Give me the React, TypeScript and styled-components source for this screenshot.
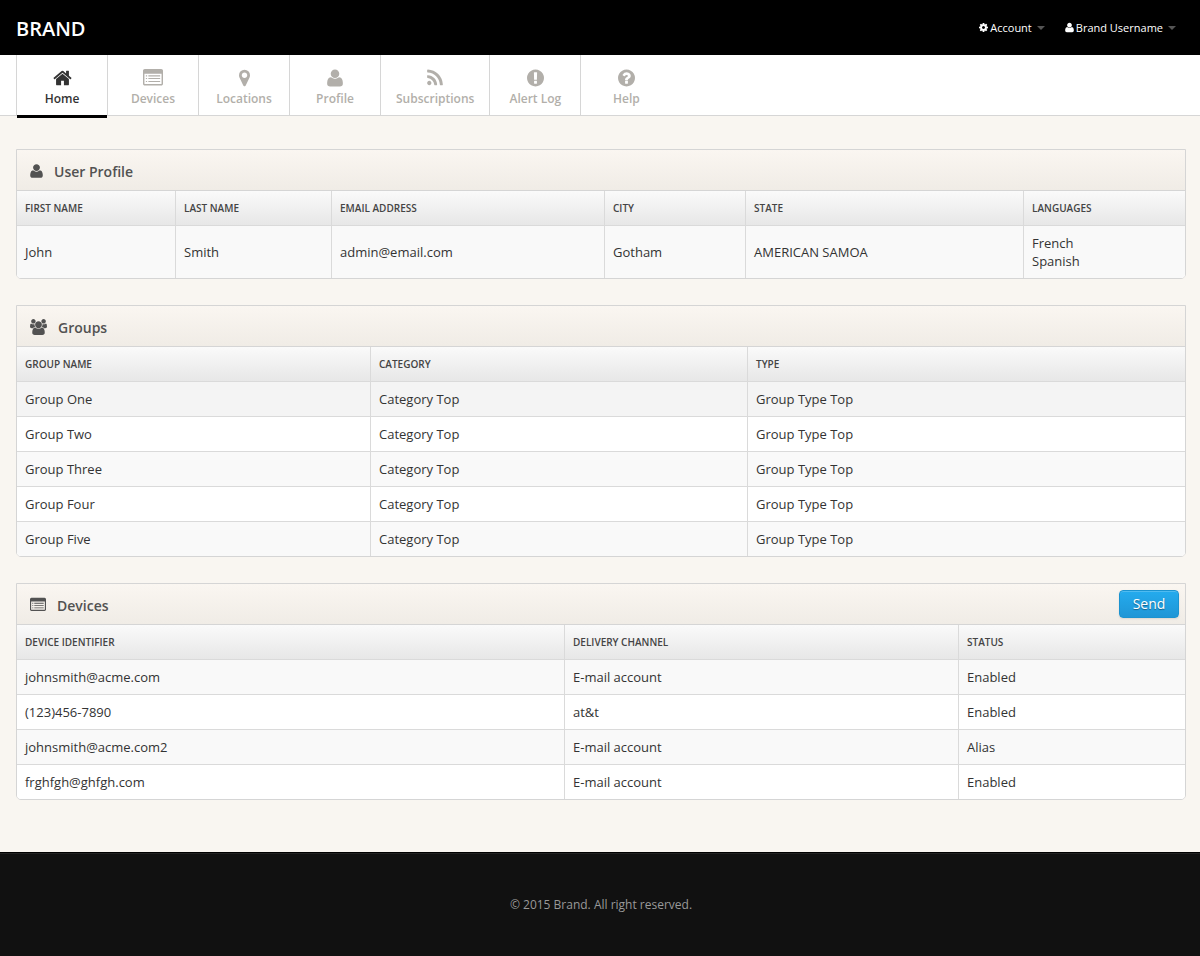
import React from "react";
import styled, { createGlobalStyle } from "styled-components";

const GlobalStyle = createGlobalStyle`
  *, *::before, *::after { box-sizing: border-box; }
  body {
    margin: 0;
    background: #f9f6f1;
    color: #333;
    font-family: "Open Sans", "Noto Sans", sans-serif;
    font-size: 13px;
    line-height: 18px;
  }
`;

type Glyph = { box: string; width: number; path: string };

const glyphs = {
  home: {
    box: "64 0 1664 1792",
    width: 1664,
    path: "M1472 992v480q0 26-19 45t-45 19h-384v-384h-256v384h-384q-26 0-45-19t-19-45v-480q0-1 .5-3t.5-3l575-474 575 474q1 2 1 6zm223-69l-62 74q-8 9-21 11h-3q-13 0-21-7l-692-577-692 577q-12 8-24 7-13-2-21-11l-62-74q-8-10-7-23.500t11-21.500l719-599q32-26 76-26t76 26l244 204v-195q0-14 9-23t23-9h192q14 0 23 9t9 23v408l219 182q10 8 11 21.500t-7 23.500z",
  },
  list: {
    box: "0 0 1792 1792",
    width: 1792,
    path: "M160 96h1472q66 0 113 47t47 113v1152q0 66-47 113t-113 47h-1472q-66 0-113-47t-47-113v-1152q0-66 47-113t113-47zm-32 416v880q0 48 48 48h1440q48 0 48-48v-880zM256 656h112v96h-112zM480 656h1056v96h-1056zM256 896h112v96h-112zM480 896h1056v96h-1056zM256 1168h112v96h-112zM480 1168h1056v96h-1056z",
  },
  marker: {
    box: "384 0 1024 1792",
    width: 1024,
    path: "M1152 640q0-106-75-181t-181-75-181 75-75 181 75 181 181 75 181-75 75-181zm256 0q0 109-33 179l-364 774q-16 33-47.500 52t-67.500 19-67.500-19-46.500-52l-365-774q-33-70-33-179 0-212 150-362t362-150 362 150 150 362z",
  },
  user: {
    box: "192 0 1408 1792",
    width: 1408,
    path: "M1600 1405q0 120-73 189.500t-194 69.500h-874q-121 0-194-69.500t-73-189.500q0-53 3.500-103.500t14-109 26.500-108.500 43-97.500 62-81 85.500-53.500 111.500-20q9 0 42 21.500t74.500 48 108 48 133.500 21.500 133.500-21.500 108-48 74.500-48 42-21.500q61 0 111.500 20t85.500 53.500 62 81 43 97.500 26.500 108.500 14 109 3.500 103.500zm-320-893q0 159-112.500 271.500t-271.500 112.500-271.500-112.500-112.500-271.500 112.500-271.500 271.500-112.500 271.500 112.500 112.500 271.500z",
  },
  rss: {
    box: "192 0 1408 1792",
    width: 1408,
    path: "M576 1344q0 80-56 136t-136 56-136-56-56-136 56-136 136-56 136 56 56 136zm512 123q2 28-17 48-18 21-47 21h-135q-25 0-43-16.500t-20-41.500q-22-229-184.500-391.500t-391.500-184.500q-25-2-41.500-20t-16.500-43v-135q0-29 21-47 17-17 43-17h5q160 13 306 80.500t259 181.500q114 113 181.500 259t80.500 306zm512 2q2 27-18 47-18 20-46 20h-143q-26 0-44.500-17.500t-19.500-42.500q-12-215-101-408.500t-231.500-336-336-231.500-408.500-102q-25-1-42.500-19.500t-17.500-43.500v-143q0-28 20-46 18-18 44-18h3q262 13 501.500 120t425.500 294q187 186 294 425.500t120 501.500z",
  },
  alert: {
    box: "128 0 1536 1792",
    width: 1536,
    path: "M896 128q209 0 385.500 103t279.500 279.500 103 385.500-103 385.500-279.500 279.500-385.500 103-385.500-103-279.500-279.500-103-385.500 103-385.500 279.500-279.500 385.500-103zm128 1247v-190q0-14-9-23.500t-22-9.500h-192q-13 0-23 10t-10 23v190q0 13 10 23t23 10h192q13 0 22-9.500t9-23.500zm-2-344l18-621q0-12-10-18-10-8-24-8h-220q-14 0-24 8-10 6-10 18l17 621q0 10 10 17.500t24 7.500h185q14 0 23.500-7.500t10.500-17.500z",
  },
  help: {
    box: "128 0 1536 1792",
    width: 1536,
    path: "M1024 1376v-192q0-14-9-23t-23-9h-192q-14 0-23 9t-9 23v192q0 14 9 23t23 9h192q14 0 23-9t9-23zm256-672q0-88-55.500-163t-138.500-116-170-41q-243 0-371 213-15 24 8 42l132 100q7 6 19 6 16 0 25-12 53-68 86-92 34-24 86-24 48 0 85.500 26t37.500 59q0 38-20 61t-68 45q-63 28-115.500 86.500t-52.500 125.500v36q0 14 9 23t23 9h192q14 0 23-9t9-23q0-19 21.500-49.500t54.500-49.500q32-18 49-28.500t46-35 44.500-48 28-60.500 12.500-81zm384 192q0 209-103 385.500t-279.500 279.500-385.500 103-385.500-103-279.500-279.500-103-385.500 103-385.500 279.500-279.500 385.500-103 385.500 103 279.500 279.500 103 385.500z",
  },
  cog: {
    box: "128 0 1536 1792",
    width: 1536,
    path: "M1152 896q0-106-75-181t-181-75-181 75-75 181 75 181 181 75 181-75 75-181zm512-109v222q0 12-8 23t-20 13l-185 28q-19 54-39 91 35 50 107 138 10 12 10 25t-9 23q-27 37-99 108t-94 71q-12 0-26-9l-138-108q-44 23-91 38-16 136-29 186-7 28-36 28h-222q-14 0-24.500-8.500t-11.500-21.500l-28-184q-49-16-90-37l-141 107q-10 9-25 9-14 0-25-11-126-114-165-168-7-10-7-23 0-12 8-23 15-21 51-66.500t54-70.500q-27-50-41-99l-183-27q-13-2-21-12.500t-8-23.500v-222q0-12 8-23t19-13l186-28q14-46 39-92-40-57-107-138-10-12-10-24 0-10 9-23 26-36 98.500-107.500t94.500-71.500q13 0 26 10l138 107q44-23 91-38 16-136 29-186 7-28 36-28h222q14 0 24.500 8.500t11.500 21.500l28 184q49 16 90 37l142-107q9-9 24-9 13 0 25 10 129 119 165 170 7 8 7 22 0 12-8 23-15 21-51 66.500t-54 70.500q26 50 41 98l183 28q13 2 21 12.500t8 23.500z",
  },
  group: {
    box: "64 0 1920 1792",
    width: 1920,
    path: "M657 896q-162 5-265 128h-134q-82 0-138-40.500t-56-118.500q0-353 124-353 6 0 43.500 21t97.500 42.500 119 21.500q67 0 133-23-5 37-5 66 0 139 81 256zm1071 637q0 120-73 189.500t-194 69.500h-874q-121 0-194-69.500t-73-189.500q0-53 3.500-103.500t14-109 26.500-108.500 43-97.500 62-81 85.500-53.500 111.500-20q10 0 43 21.500t73 48 107 48 135 21.500 135-21.500 107-48 73-48 43-21.500q61 0 111.500 20t85.500 53.500 62 81 43 97.500 26.500 108.500 14 109 3.500 103.500zm-1024-1277q0 106-75 181t-181 75-181-75-75-181 75-181 181-75 181 75 75 181zm704 384q0 159-112.500 271.500t-271.500 112.500-271.500-112.500-112.500-271.500 112.500-271.500 271.500-112.500 271.500 112.500 112.500 271.500zm576 225q0 78-56 118.500t-138 40.500h-134q-103-123-265-128 81-117 81-256 0-29-5-66 66 23 133 23 59 0 119-21.500t97.500-42.500 43.500-21q124 0 124 353zm-128-609q0 106-75 181t-181 75-181-75-75-181 75-181 181-75 181 75 75 181z",
  },
} satisfies Record<string, Glyph>;

type GlyphName = keyof typeof glyphs;

const IconSvg = styled.svg`
  display: block;
  flex: none;
  fill: currentColor;
  fill-rule: evenodd;
`;

function Icon({ name, size }: { name: GlyphName; size: number }) {
  const glyph = glyphs[name];
  return (
    <IconSvg
      viewBox={glyph.box}
      width={Math.round((glyph.width / 1792) * size)}
      height={size}
      aria-hidden="true"
    >
      <path d={glyph.path} />
    </IconSvg>
  );
}

const Page = styled.div`
  display: flex;
  flex-direction: column;
  min-height: 100vh;
`;

const TopBar = styled.header`
  display: flex;
  align-items: center;
  justify-content: space-between;
  height: 55px;
  padding: 0 14px 0 16px;
  background: #000;
`;

const Brand = styled.a`
  color: #fff;
  font-size: 20px;
  font-weight: 600;
  line-height: 20px;
  padding-top: 2px;
  text-decoration: none;
`;

const AccountMenu = styled.div`
  display: flex;
`;

const MenuButton = styled.button`
  display: flex;
  align-items: center;
  gap: 2px;
  padding: 0 10px;
  border: 0;
  background: none;
  color: #fff;
  font: inherit;
  font-size: 11px;
  cursor: pointer;
`;

const Caret = styled.span`
  margin-left: 3px;
  border: 4px solid transparent;
  border-top-color: #555;
  border-bottom: 0;
`;

const NavBar = styled.nav`
  height: 61px;
  padding: 0 14px 0 16px;
  border-bottom: 1px solid #d6d6d6;
  background: #fff;
`;

const NavList = styled.ul`
  display: flex;
  margin: 0;
  padding: 0;
  list-style: none;
`;

const NavItem = styled.li`
  min-width: 91px;
  height: 60px;
  border-left: 1px solid #d6d6d6;
`;

const NavLink = styled.a<{ $active?: boolean }>`
  display: flex;
  flex-direction: column;
  align-items: center;
  gap: 2px;
  height: 63px;
  padding: 13px 15px 0;
  border-bottom: 3px solid ${(p) => (p.$active ? "#000" : "transparent")};
  color: ${(p) => (p.$active ? "#333" : "#b2afaa")};
  font-size: 12px;
  font-weight: 600;
  text-decoration: none;
`;

const Main = styled.main`
  display: flex;
  flex: 1;
  flex-direction: column;
  gap: 26px;
  padding: 33px 14px 52px 16px;
`;

const Panel = styled.section`
  overflow: hidden;
  border: 1px solid #d5d5d5;
  border-radius: 0 0 5px 5px;
`;

const PanelHeader = styled.div`
  display: flex;
  align-items: center;
  justify-content: space-between;
  height: 41px;
  padding: 0 6px 0 13px;
  border-bottom: 1px solid #d5d5d5;
  background: linear-gradient(#faf6f1, #f0ece6);
`;

const PanelTitle = styled.h2`
  display: flex;
  align-items: flex-start;
  gap: 11px;
  margin: 0;
  padding-top: 3px;
  color: #525252;
  font-size: 14px;
  font-weight: 600;
`;

const SendButton = styled.button`
  width: 60px;
  height: 28px;
  padding: 0;
  border: 1px solid #1b93d0;
  border-radius: 4px;
  background: linear-gradient(#24abee, #1f96d6);
  box-shadow: inset 0 1px 0 rgba(255, 255, 255, 0.2), 0 1px 2px rgba(0, 0, 0, 0.1);
  color: #fff;
  font: inherit;
  font-size: 14px;
  text-shadow: 0 1px 1px rgba(0, 0, 0, 0.4);
  cursor: pointer;
`;

const Table = styled.table`
  width: 100%;
  border-spacing: 0;
  table-layout: fixed;
  background: #fff;
`;

const HeadCell = styled.th`
  height: 34px;
  padding: 0 8px;
  background: linear-gradient(#fafafa, #e7e7e7);
  color: #444;
  font-size: 10px;
  font-weight: 600;
  text-align: left;
  text-transform: uppercase;

  & + & {
    border-left: 1px solid #dadada;
  }
`;

const Cell = styled.td`
  padding: 8px;
  border-top: 1px solid #dadada;
  overflow-wrap: anywhere;

  & + & {
    border-left: 1px solid #dadada;
  }
`;

const Row = styled.tr<{ $highlight?: boolean }>`
  &:nth-child(odd) {
    background: ${(p) => (p.$highlight ? "#f4f4f4" : "#f9f9f9")};
  }
`;

const Line = styled.div``;

const Footer = styled.footer`
  padding: 43px 14px 42px 16px;
  border-top: 1px solid #000;
  background: #111;
  box-shadow: inset 0 1px 0 #222;
  color: #999;
  font-size: 12px;
  text-align: center;
`;

const FooterText = styled.p`
  margin: 0;
`;

const navItems: { icon: GlyphName; label: string }[] = [
  { icon: "home", label: "Home" },
  { icon: "list", label: "Devices" },
  { icon: "marker", label: "Locations" },
  { icon: "user", label: "Profile" },
  { icon: "rss", label: "Subscriptions" },
  { icon: "alert", label: "Alert Log" },
  { icon: "help", label: "Help" },
];

type Column = { title: string; width: number };

const profileColumns: Column[] = [
  { title: "First Name", width: 158 },
  { title: "Last Name", width: 156 },
  { title: "Email Address", width: 273 },
  { title: "City", width: 141 },
  { title: "State", width: 278 },
  { title: "Languages", width: 162 },
];

const groupColumns: Column[] = [
  { title: "Group Name", width: 353 },
  { title: "Category", width: 377 },
  { title: "Type", width: 438 },
];

const deviceColumns: Column[] = [
  { title: "Device Identifier", width: 547 },
  { title: "Delivery Channel", width: 394 },
  { title: "Status", width: 227 },
];

const groupRows = ["One", "Two", "Three", "Four", "Five"].map((n) => [
  `Group ${n}`,
  "Category Top",
  "Group Type Top",
]);

const deviceRows = [
  ["johnsmith@acme.com", "E-mail account", "Enabled"],
  ["(123)456-7890", "at&t", "Enabled"],
  ["johnsmith@acme.com2", "E-mail account", "Alias"],
  ["frghfgh@ghfgh.com", "E-mail account", "Enabled"],
];

type DataPanelProps = {
  icon: GlyphName;
  title: string;
  columns: Column[];
  rows: (string | string[])[][];
  highlightedRow?: number;
  action?: React.ReactNode;
};

function DataPanel({ icon, title, columns, rows, highlightedRow, action }: DataPanelProps) {
  return (
    <Panel>
      <PanelHeader>
        <PanelTitle>
          <Icon name={icon} size={16} />
          {title}
        </PanelTitle>
        {action}
      </PanelHeader>
      <Table aria-label={title}>
        <colgroup>
          {columns.map((column) => (
            <col key={column.title} width={column.width} />
          ))}
        </colgroup>
        <thead>
          <tr>
            {columns.map((column) => (
              <HeadCell key={column.title} scope="col">
                {column.title}
              </HeadCell>
            ))}
          </tr>
        </thead>
        <tbody>
          {rows.map((row, r) => (
            <Row key={r} $highlight={r === highlightedRow}>
              {row.map((value, c) => (
                <Cell key={c}>
                  {Array.isArray(value) ? value.map((line) => <Line key={line}>{line}</Line>) : value}
                </Cell>
              ))}
            </Row>
          ))}
        </tbody>
      </Table>
    </Panel>
  );
}

export default function App() {
  return (
    <Page>
      <GlobalStyle />
      <TopBar>
        <Brand href="#">BRAND</Brand>
        <AccountMenu>
          <MenuButton type="button" aria-haspopup="menu">
            <Icon name="cog" size={11} />
            Account
            <Caret />
          </MenuButton>
          <MenuButton type="button" aria-haspopup="menu">
            <Icon name="user" size={11} />
            Brand Username
            <Caret />
          </MenuButton>
        </AccountMenu>
      </TopBar>
      <NavBar>
        <NavList>
          {navItems.map((item, i) => (
            <NavItem key={item.label}>
              <NavLink href="#" $active={i === 0} aria-current={i === 0 ? "page" : undefined}>
                <Icon name={item.icon} size={20} />
                {item.label}
              </NavLink>
            </NavItem>
          ))}
        </NavList>
      </NavBar>
      <Main>
        <DataPanel
          icon="user"
          title="User Profile"
          columns={profileColumns}
          rows={[["John", "Smith", "admin@email.com", "Gotham", "AMERICAN SAMOA", ["French", "Spanish"]]]}
        />
        <DataPanel
          icon="group"
          title="Groups"
          columns={groupColumns}
          rows={groupRows}
          highlightedRow={0}
        />
        <DataPanel
          icon="list"
          title="Devices"
          columns={deviceColumns}
          rows={deviceRows}
          action={<SendButton type="button">Send</SendButton>}
        />
      </Main>
      <Footer>
        <FooterText>© 2015 Brand. All right reserved.</FooterText>
      </Footer>
    </Page>
  );
}
